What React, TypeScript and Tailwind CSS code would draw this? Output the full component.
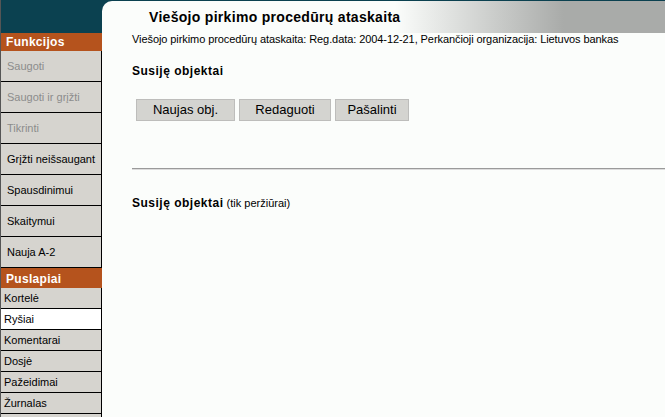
const funkcijos = [
  { label: "Saugoti", disabled: true },
  { label: "Saugoti ir grįžti", disabled: true },
  { label: "Tikrinti", disabled: true },
  { label: "Grįžti neišsaugant", disabled: false },
  { label: "Spausdinimui", disabled: false },
  { label: "Skaitymui", disabled: false },
  { label: "Nauja A-2", disabled: false },
]

const puslapiai = [
  { label: "Kortelė", active: false },
  { label: "Ryšiai", active: true },
  { label: "Komentarai", active: false },
  { label: "Dosjė", active: false },
  { label: "Pažeidimai", active: false },
  { label: "Žurnalas", active: false },
  { label: "", active: false },
]

export default function App() {
  return (
    <div className="flex w-[665px] h-[417px] overflow-hidden bg-[#0b4150] font-['Liberation_Sans',Arial,sans-serif] text-[11px] text-black">
      {/* Left menu */}
      <aside className="w-[102px] shrink-0 flex flex-col border-l border-[#555]">
        <div className="h-[33px] shrink-0 bg-[#0b4150]" />
        <div className="h-[18px] shrink-0 bg-[#b5531d] text-white font-bold text-[12px] leading-[18px] pl-[5px] tracking-[0.3px]">
          Funkcijos
        </div>
        {funkcijos.map((f) => (
          <div
            key={f.label}
            className={`h-[31px] shrink-0 bg-[#d6d4cf] border-r border-b border-black flex items-center pl-[6px] ${f.disabled ? "text-[#8c8c8c]" : "text-black"}`}
          >
            {f.label}
          </div>
        ))}
        <div className="h-[20px] shrink-0 bg-[#b5531d] text-white font-bold text-[12px] leading-[22px] pl-[5px] tracking-[0.3px]">
          Puslapiai
        </div>
        {puslapiai.map((p, i) => (
          <div
            key={i}
            className={`h-[21px] shrink-0 border-r border-b border-black flex items-center pl-[3px] ${p.active ? "bg-white" : "bg-[#d6d4cf]"}`}
          >
            {p.label}
          </div>
        ))}
      </aside>

      {/* Main */}
      <main className="flex-1 flex flex-col pt-px">
        <header className="h-[32px] shrink-0 rounded-tl-[10px] bg-[linear-gradient(to_right,#fbfdfb_0%,#fbfdfb_52%,#a9aba9_82%,#a9aba9_100%)] flex items-center pl-[47px]">
          <h1 className="font-bold text-[14px] tracking-[0.3px] pt-[1px]">Viešojo pirkimo procedūrų ataskaita</h1>
        </header>
        <div className="flex-1 bg-[#fbfdfb] pl-[30px]">
          <p className="leading-[13px] tracking-[-0.08px]">
            Viešojo pirkimo procedūrų ataskaita: Reg.data: 2004-12-21, Perkančioji organizacija: Lietuvos bankas
          </p>
          <p className="mt-[19px] font-bold text-[12px] leading-[13px] tracking-[0.5px]">Susiję objektai</p>
          <div className="mt-[21px] ml-[4px] flex gap-[4px] text-[13px]">
            <button className="h-[22px] w-[99px] bg-[#d4d4d0] border border-[#bdbdbb]">Naujas obj.</button>
            <button className="h-[22px] w-[92px] bg-[#d4d4d0] border border-[#bdbdbb]">Redaguoti</button>
            <button className="h-[22px] w-[74px] bg-[#d4d4d0] border border-[#bdbdbb]">Pašalinti</button>
          </div>
          <div className="mt-[47px] border-t border-[#9a9a9a] border-b border-b-[#dcdcdc] h-[2px]" />
          <p className="mt-[27px] leading-[13px]">
            <span className="font-bold text-[12px] tracking-[0.5px]">Susiję objektai</span> (tik peržiūrai)
          </p>
        </div>
      </main>
    </div>
  )
}
